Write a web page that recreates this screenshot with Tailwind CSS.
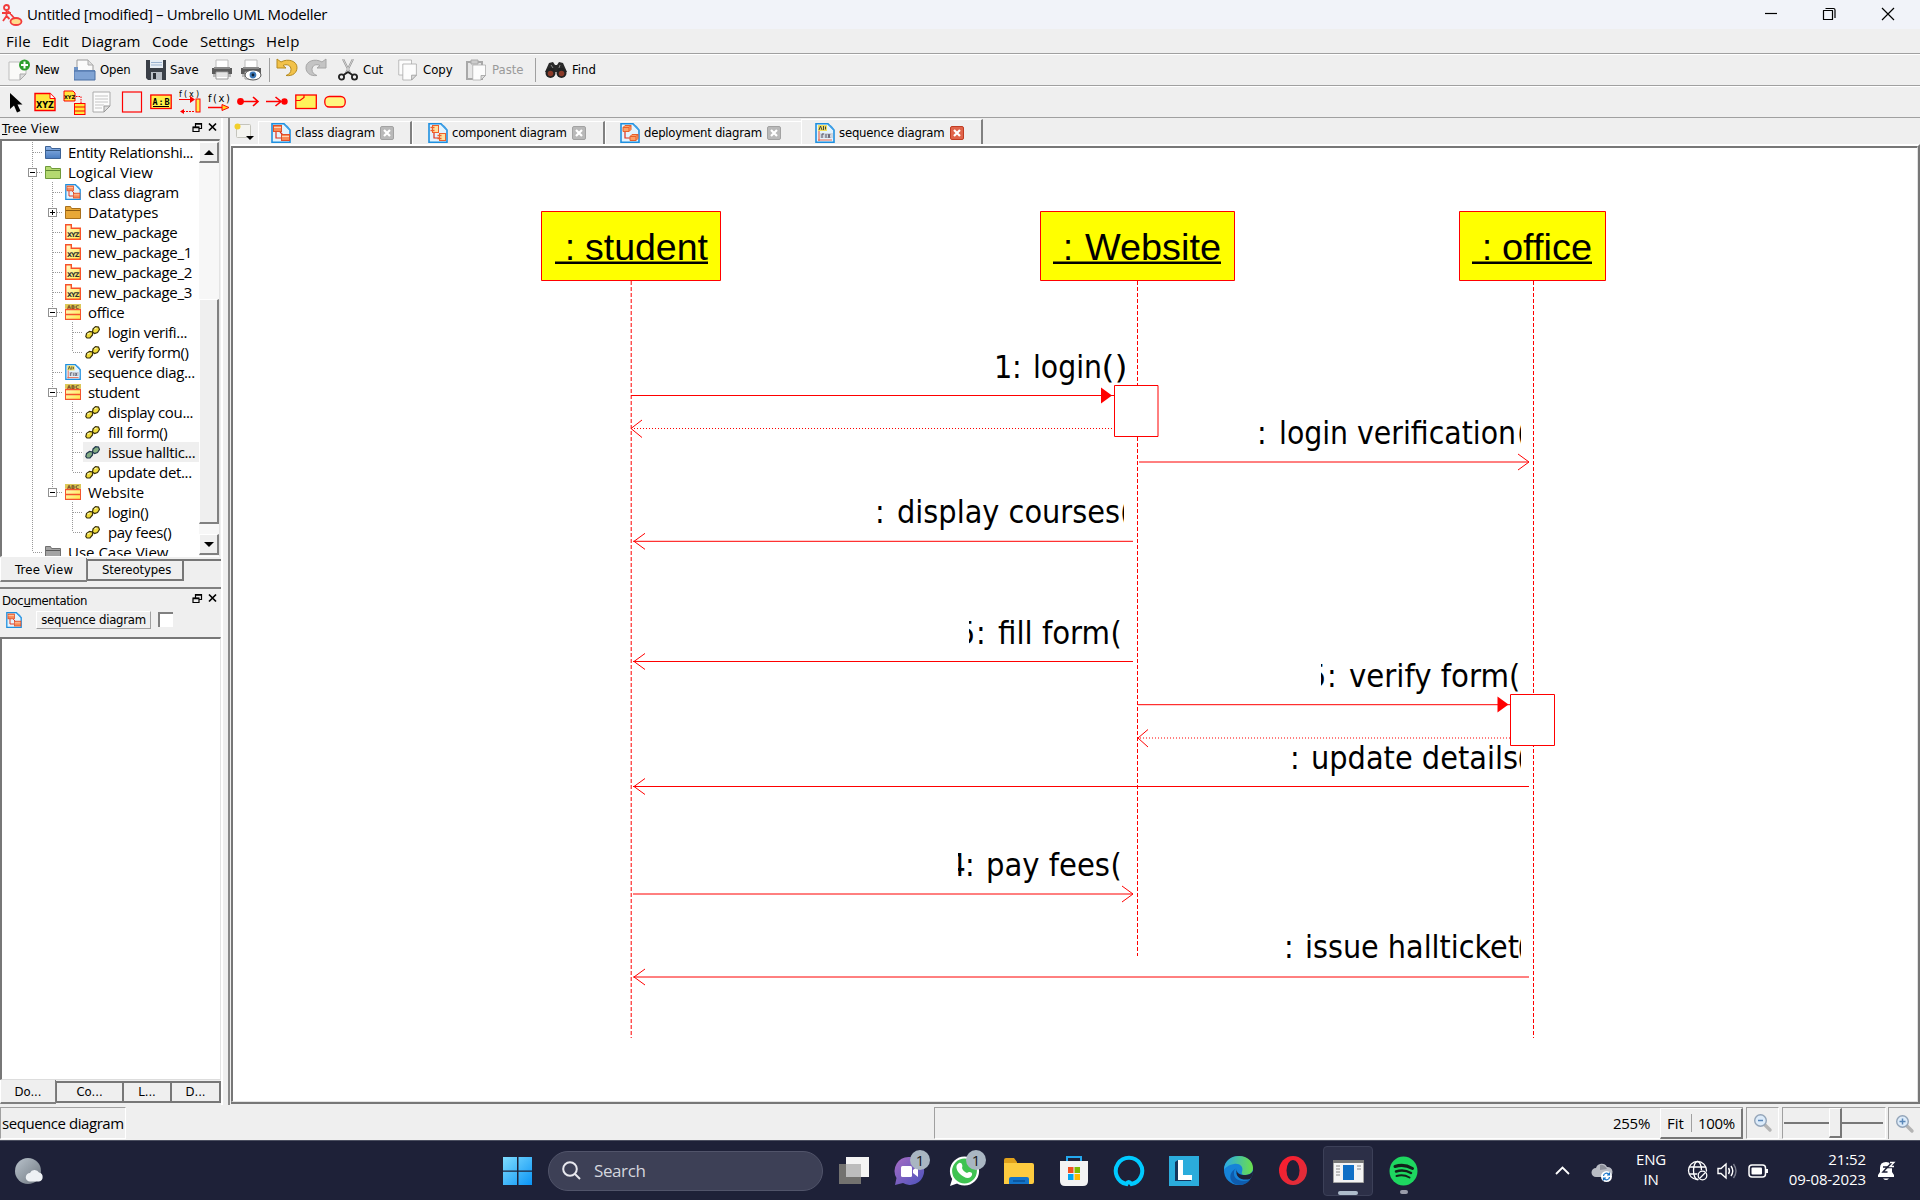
<!DOCTYPE html>
<html lang="en">
<head>
<meta charset="utf-8">
<title>Untitled [modified] – Umbrello UML Modeller</title>
<script src="https://cdn.jsdelivr.net/npm/@tailwindcss/browser@4"></script>
</head>
<body class="w-[1920px] h-[1200px] overflow-hidden bg-[#efefef] text-black font-['Open_Sans',sans-serif] text-[15px] leading-5 whitespace-nowrap">

<svg width="0" height="0" class="absolute">
  <defs>
    <linearGradient id="gBlue" x1="0" y1="0" x2="0" y2="1"><stop offset="0" stop-color="#8fb4e6"/><stop offset="1" stop-color="#4a7cc0"/></linearGradient>
    <linearGradient id="gYel" x1="0" y1="0" x2="1" y2="1"><stop offset="0" stop-color="#fffbd0"/><stop offset="1" stop-color="#ffe94a"/></linearGradient>
    <linearGradient id="gWin" x1="0" y1="0" x2="1" y2="1"><stop offset="0" stop-color="#7fdcff"/><stop offset="1" stop-color="#0a94f5"/></linearGradient>
    <linearGradient id="gMoon" x1="0" y1="0" x2="1" y2="1"><stop offset="0" stop-color="#b9c3cc"/><stop offset="1" stop-color="#6f7780"/></linearGradient>
    <linearGradient id="gChat" x1="0" y1="0" x2="1" y2="1"><stop offset="0" stop-color="#a86cc4"/><stop offset="1" stop-color="#4b53bc"/></linearGradient>
    <linearGradient id="gEdge" x1="0" y1="0" x2="1" y2="0"><stop offset="0" stop-color="#2aa8e8"/><stop offset="1" stop-color="#6be04a"/></linearGradient>
    <linearGradient id="gOpera" x1="0" y1="0" x2="1" y2="1"><stop offset="0" stop-color="#ff1b2d"/><stop offset="1" stop-color="#d8313c"/></linearGradient>
    <symbol id="page" viewBox="0 0 20 20"><path d="M1 .8h12l6 6.2v12.2H1z" fill="#e3f3fd" stroke="#1e8fdf" stroke-width="1.6"/><path d="M12 1l7 7c0-3-2-6-7-7z" fill="#3f9fe6"/></symbol>
    <symbol id="dclass" viewBox="0 0 20 20"><use href="#page"/><path d="M5 7v8h5M9 9l3 3" fill="none" stroke="#e0301c" stroke-width="1.2"/><rect x="2.5" y="2.5" width="8" height="6" fill="#f98b56" stroke="#e0502a"/><rect x="10.5" y="11.5" width="8" height="6" fill="#f98b56" stroke="#e0502a"/><path d="M3 4.5h7M11 13.500h7" stroke="#ffd3b5"/></symbol>
    <symbol id="dcomp" viewBox="0 0 20 20"><use href="#page"/><path d="M6 9v6h5" fill="none" stroke="#e0301c" stroke-width="1.2"/><rect x="4.500" y="2.500" width="6" height="7" fill="#ffe0a0" stroke="#f0602a"/><rect x="11.500" y="10.500" width="6" height="7" fill="#ffe0a0" stroke="#f0602a"/><path d="M2.500 4.500h4M2.500 7.500h4M9.500 12.500h4M9.500 15.500h4" stroke="#f0602a" stroke-width="1.400"/></symbol>
    <symbol id="ddep" viewBox="0 0 20 20"><use href="#page"/><path d="M5 9v6h5" fill="none" stroke="#e0301c" stroke-width="1.2"/><path d="M3 4.500l2-2h6v4l-2 2H3zM10 13.500l2-2h6v4l-2 2h-6z" fill="#fba068" stroke="#e8602a"/><path d="M3 4.500h6v4M9 4.500l2-2M10 13.500h6v4M16 13.500l2-2" fill="none" stroke="#e8602a"/></symbol>
    <symbol id="dseq" viewBox="0 0 20 20"><use href="#page"/><rect x="3" y="2" width="9" height="6" fill="#f2e060"/><path d="M4 7l1.500-4L7 7M8.500 3v4M10.500 3.500v3" stroke="#444" fill="none"/><rect x="5" y="10" width="13" height="5" fill="#cfd6de"/><path d="M7 15v-4h2M11 11v4M13 11l2 4M15 11l-2 4" stroke="#556" fill="none"/><path d="M4 8v10M3 17h14" stroke="#e86a50" stroke-width="1.200"/></symbol>
    <symbol id="pkg" viewBox="0 0 16 16"><path d="M.7.7h5.600v3.600h9v11H.7z" fill="url(#gYel)" stroke="#f8522a" stroke-width="1.400"/><text x="8.200" y="13.200" font-size="6.500" font-weight="bold" font-family="DejaVu Sans" text-anchor="middle" textLength="12.500" fill="#333">XYZ</text></symbol>
    <symbol id="cls" viewBox="0 0 16 16"><rect x=".5" y=".5" width="15" height="15" fill="url(#gYel)"/><rect x="0" y="0" width="16" height="4.500" fill="#dcc95a"/><text x="8" y="4.600" font-size="5.200" font-weight="bold" font-family="DejaVu Sans" text-anchor="middle" textLength="12" fill="#6b4a20">ABC</text><path d="M0 5.500h16M0 10.500h16M0 15.300h16" stroke="#f4552c" stroke-width="1.300"/><path d="M.5 5v10.500M15.500 5v10.500" stroke="#f4552c"/></symbol>
    <symbol id="op" viewBox="0 0 15 13"><path d="M1.500 7.500l3-2 3 .5v3l-2.500 3h-3L.8 10.500zM8 3l2.500-2.300 3 .3 1 2.500-2 3-3 1L7.500 6z" fill="#f0dc3c" stroke="#3a3208" stroke-width="1.200"/><path d="M2.500 8l2-1M9.500 3l2-1.200" stroke="#fff9c0" stroke-width="1.200"/></symbol>
    <symbol id="opsel" viewBox="0 0 15 13"><path d="M1.500 7.500l3-2 3 .5v3l-2.500 3h-3L.8 10.500zM8 3l2.500-2.300 3 .3 1 2.500-2 3-3 1L7.500 6z" fill="#84ad84" stroke="#20384c" stroke-width="1.200"/></symbol>
    <symbol id="fblue" viewBox="0 0 16 16"><path d="M.5 14.500v-12h5l1 2h9v10z" fill="url(#gBlue)" stroke="#3c6296"/><path d="M1 6.500h14" stroke="#34557f"/></symbol>
    <symbol id="fgreen" viewBox="0 0 16 16"><path d="M.5 14.500v-12h5l1 2h9v10z" fill="#b4d970" stroke="#6f9a3a"/><path d="M1 6.500h14" stroke="#5f8632"/></symbol>
    <symbol id="forange" viewBox="0 0 16 16"><path d="M.5 14.500v-12h5l1 2h9v10z" fill="#e8a838" stroke="#a8701c"/><path d="M1 6.500h14" stroke="#8c5a10"/></symbol>
    <symbol id="fgray" viewBox="0 0 16 16"><path d="M.5 14.500v-12h5l1 2h9v10z" fill="#a4a4a4" stroke="#707070"/><path d="M1 6.500h14" stroke="#5a5a5a"/></symbol>
    <symbol id="xgray" viewBox="0 0 14 14"><rect x=".5" y=".5" width="13" height="13" rx="1.500" fill="#b9b9b9" stroke="#a2a2a2"/><path d="M4 4l6 6M10 4l-6 6" stroke="#fff" stroke-width="2.200"/></symbol>
    <symbol id="xred" viewBox="0 0 14 14"><rect x=".5" y=".5" width="13" height="13" rx="1.500" fill="#e0644a" stroke="#c03c22"/><path d="M4 4l6 6M10 4l-6 6" stroke="#fff" stroke-width="2.200"/></symbol>
    <symbol id="dockbtns" viewBox="0 0 26 11"><path d="M3.500 1.500h6v5h-6zM3 2.200h7" fill="none" stroke="#000" stroke-width="1.200"/><path d="M1 5h6v4.500H1z" fill="#efefef" stroke="#000" stroke-width="1.200"/><path d="M1 5.500h6" stroke="#000" stroke-width="1.500"/><path d="M17 1.500l7 7M24 1.500l-7 7" stroke="#000" stroke-width="1.700"/></symbol>
    <symbol id="printer" viewBox="0 0 22 22"><path d="M5 1h12v8H5z" fill="#fff" stroke="#bbb"/><path d="M1 9h20v6H1z" fill="#5c5c5c"/><path d="M3 8h16v2H3z" fill="#8b8b8b"/><path d="M2 15h18v3H2z" fill="#b8b8b8"/><path d="M5 13h12v7H5z" fill="#fff" stroke="#999"/><path d="M6 15h10M6 17h10" stroke="#c8c8c8"/></symbol>
    <symbol id="sheet" viewBox="0 0 20 22"><path d="M1 1h17v14l-6 6H1z" fill="#fcfcfc" stroke="#aaa"/><path d="M18 15h-6v6z" fill="#ddd" stroke="#999"/></symbol>
    <symbol id="lens" viewBox="0 0 20 20"><path d="M11 11l6 6" stroke="#b4b4b4" stroke-width="3.400" stroke-linecap="round"/><circle cx="7.500" cy="7.500" r="5.800" fill="#dcebfa" stroke="#93a4b8" stroke-width="1.400"/></symbol>
  </defs>
</svg>

<div class="flex flex-col w-[1920px] h-[1200px]">

  <!-- title bar -->
  <header class="h-[29px] shrink-0 bg-[#f1f3f9] flex items-center pl-[2px]">
    <svg width="21" height="22" viewBox="0 0 21 22" fill="none" stroke="#f23c3c" stroke-width="1.800"><circle cx="4.500" cy="3.500" r="2.500"/><path d="M4.500 6v6M0 9h9M4.500 12L1 17M4.500 12l3 3M6 7l7 8"/><ellipse cx="14" cy="17.500" rx="5.500" ry="3.500" fill="#ffdc8c"/></svg>
    <span class="ml-1 tracking-[-0.34px] w-[1744px] pb-[2px]">Untitled [modified] – Umbrello UML Modeller</span>
    <svg width="150" height="29" viewBox="0 0 150 29" fill="none" stroke="#000" stroke-width="1.200" class="-ml-2"><path d="M2 13.500h12"/><path d="M60.500 10.500h9v9h-9z" stroke-linejoin="round"/><path d="M62.500 8.500h8q1.500 0 1.500 1.500v8"/><path d="M119 8l12 12M131 8l-12 12"/></svg>
  </header>

  <!-- menu bar -->
  <nav class="h-[25px] shrink-0 border-b border-[#a0a0a0] flex items-center pl-[6px] pb-px">
    <span class="w-9 tracking-[0.3px]">File</span><span class="w-[39px] tracking-[0.1px]">Edit</span><span class="w-[71px]">Diagram</span><span class="w-12">Code</span><span class="w-[66px] tracking-[-0.1px]">Settings</span><span class="tracking-[0.3px]">Help</span>
  </nav>

  <!-- main toolbar -->
  <div class="h-8 shrink-0 border-t border-t-white border-b border-b-[#a0a0a0] flex items-center font-['DejaVu_Sans_Condensed',sans-serif] text-[13px]">
    <div class="w-[66px] pl-2 flex items-center gap-1"><svg width="23" height="22" viewBox="0 0 23 22"><path d="M1 3h17v12l-6 6H1z" fill="#fafaf8" stroke="#bdbdbd"/><path d="M18 15h-6v6z" fill="#ddd" stroke="#aaa"/><circle cx="16.500" cy="6" r="5.500" fill="#2e9e2e"/><path d="M16.500 2.500v7M13 6h7" stroke="#fff" stroke-width="2"/></svg><span class="tracking-[-0.5px]">New</span></div>
    <div class="w-[73px] pl-2 flex items-center gap-1"><svg width="22" height="22" viewBox="0 0 22 22"><path d="M3 1h11l5 5v10H3z" fill="#fafafa" stroke="#999"/><path d="M14 1v5h5" fill="#ddd" stroke="#aaa"/><path d="M0 21V8h4v3h17v10z" fill="#6f94c6"/><path d="M0 21V12h21v9z" fill="#7fa3d4" stroke="#4a6fa3"/></svg><span class="tracking-[-0.2px]">Open</span></div>
    <div class="w-[67px] pl-[7px] flex items-center gap-1"><svg width="20" height="22" viewBox="0 0 20 22"><path d="M0 1h20v20H2l-2-2z" fill="#3a3f47"/><rect x="4" y="1" width="13" height="8" fill="#e8eef5"/><path d="M5 3.500h11M5 6h11" stroke="#9bb3d0"/><rect x="5" y="13" width="11" height="8" fill="#b9bec6"/><rect x="7" y="14" width="3" height="6" fill="#2b2f36"/></svg><span>Save</span></div>
    <svg width="22" height="22" class="ml-[5px]"><use href="#printer"/></svg>
    <svg width="22" height="22" viewBox="0 0 22 22" class="ml-[7px]"><use href="#printer" width="22" height="22"/><ellipse cx="13" cy="16" rx="8" ry="5" fill="#fff" stroke="#555"/><circle cx="13" cy="16" r="3.400" fill="#3b78b8"/><circle cx="13" cy="16" r="1.400" fill="#123"/></svg>
    <div class="ml-[7px] w-px h-6 bg-[#a0a0a0]"></div>
    <svg width="22" height="22" viewBox="0 0 22 22" class="ml-[6px] mb-[2px]"><path d="M1 1v9h9L7 7.500c4-2 8 0 8 4 0 3-2 5-5 6 7 1 11-3 11-8C21 3 12 0 5 4z" fill="#f2c24a" stroke="#b58a1e"/></svg>
    <svg width="22" height="22" viewBox="0 0 22 22" class="ml-[7px] mb-[2px]"><path d="M21 1v9h-9l3-2.500c-4-2-8 0-8 4 0 3 2 5 5 6-7 1-11-3-11-8C1 3 10 0 17 4z" fill="#c4c4c4" stroke="#a6a6a6"/></svg>
    <div class="ml-[11px] w-[60px] flex items-center gap-[5px]"><svg width="20" height="22" viewBox="0 0 20 22" fill="none"><path d="M5 0l7 14M15 0L8 14" stroke="#8c8c8c" stroke-width="2"/><path d="M5 0l7 14M15 0L8 14" stroke="#e8e8e8" stroke-width=".8"/><circle cx="3.500" cy="18" r="2.600" stroke="#222" stroke-width="1.800"/><circle cx="16.500" cy="18" r="2.600" stroke="#222" stroke-width="1.800"/><path d="M5.500 16l4.500-3M14.500 16L10 13" stroke="#222" stroke-width="2"/></svg><span>Cut</span></div>
    <div class="w-[68px] flex items-center gap-[5px]"><svg width="20" height="22" viewBox="0 0 20 22"><use href="#sheet" width="15" height="17"/><use href="#sheet" x="4" y="4" width="16" height="18"/></svg><span>Copy</span></div>
    <div class="w-[69px] flex items-center gap-1 text-[#9a9a9a]"><svg width="22" height="22" viewBox="0 0 22 22"><rect x="1" y="3" width="15" height="17" fill="#e6e6e6" stroke="#a8a8a8" stroke-width="2"/><path d="M5 1h7v4H5z" fill="#ccc" stroke="#aaa"/><use href="#sheet" x="6" y="5" width="15" height="17"/></svg><span>Paste</span></div>
    <div class="w-px h-6 bg-[#a0a0a0]"></div>
    <div class="ml-[9px] flex items-center gap-[5px]"><svg width="22" height="18" viewBox="0 0 22 18"><path d="M4 2l4-1 2 3h2l2-3 4 1 4 9H0z" fill="#2a2a2a"/><circle cx="5.500" cy="12" r="5" fill="#222"/><circle cx="16.500" cy="12" r="5" fill="#222"/><circle cx="5.500" cy="12.500" r="2.800" fill="#8a3a28"/><circle cx="16.500" cy="12.500" r="2.800" fill="#8a3a28"/><path d="M6 4l2 3M15 4l-1 3" stroke="#888"/></svg><span>Find</span></div>
  </div>

  <!-- diagram tools -->
  <div class="h-8 shrink-0 border-t border-t-white border-b border-b-[#a0a0a0] flex items-center gap-[7px] pl-[9px]">
    <svg width="22" height="22" viewBox="0 0 22 22"><path d="M1 2v16l4-3.500 3 7 3.500-1.500-3-6.500h5z"/></svg>
    <svg width="22" height="22" viewBox="0 0 22 22" class="ml-[-4px]"><path d="M1 2.500h15l5 5V19.500H1z" fill="#ffe63c" stroke="#f00" stroke-width="1.400"/><path d="M16 2.500v5h5" fill="#fff" stroke="#f00"/><text x="11" y="16.500" font-size="8.500" font-weight="bold" font-family="DejaVu Sans" text-anchor="middle" textLength="18" lengthAdjust="spacingAndGlyphs">XYZ</text></svg>
    <svg width="23" height="25" viewBox="0 0 23 25"><path d="M1 1h9l2 2v8H1z" fill="#ffe63c" stroke="#f00"/><text x="6.500" y="9" font-size="5" font-weight="bold" font-family="DejaVu Sans" text-anchor="middle">XYZ</text><path d="M13 6.500h5V13" fill="none" stroke="#f00" stroke-dasharray="1.500 1"/><rect x="11.500" y="13.500" width="10.500" height="11" fill="#ffe63c" stroke="#f00"/><path d="M11 17h11M11 21h11" stroke="#f00"/></svg>
    <svg width="20" height="22" viewBox="0 0 20 22" class="ml-[-1px]"><use href="#sheet" width="20" height="22"/><path d="M3 5h13M3 8h13M3 11h13M3 14h9M3 17h7" stroke="#c4c4c4"/></svg>
    <svg width="22" height="22" viewBox="0 0 22 22" class="ml-[2px]"><rect x="1.500" y="1" width="19" height="20" fill="none" stroke="#f00" stroke-width="1.200"/></svg>
    <svg width="22" height="22" viewBox="0 0 22 22"><rect x=".8" y="4" width="20.400" height="13.500" fill="#fff04a" stroke="#f00" stroke-width="1.300"/><text x="11" y="13.500" font-size="8.500" font-weight="bold" font-family="DejaVu Sans Mono" text-anchor="middle" textLength="17">A:B</text><path d="M3 15.500h16" stroke="#000"/></svg>
    <svg width="22" height="24" viewBox="0 0 22 24"><text x="0" y="6.500" font-size="8" font-family="DejaVu Sans" textLength="20">f(x)</text><path d="M0 9.500h13" stroke="#f00"/><path d="M11 6l5 3.500-5 3.500z" fill="#f00"/><rect x="17" y="9" width="4" height="13" fill="#fff04a" stroke="#f00"/><path d="M4 21.500h12" stroke="#f00" stroke-dasharray="2 1"/><path d="M5 19l-4 2.500L5 24z" fill="#f00"/></svg>
    <svg width="23" height="22" viewBox="0 0 23 22"><text x="0" y="10.500" font-size="10" font-family="DejaVu Sans" textLength="22">f(x)</text><path d="M0 16.500h16" stroke="#f00" stroke-width="1.500"/><path d="M14 13.500l7 3-7 3z" fill="#ffd21e" stroke="#f00"/></svg>
    <svg width="23" height="22" viewBox="0 0 23 22" fill="none" stroke="#f00" stroke-width="1.600" class="ml-[-1px]"><circle cx="3.500" cy="10.500" r="2.600" fill="#f00"/><path d="M3 10.500h18M16 6l5 4.500-5 4.500"/></svg>
    <svg width="22" height="22" viewBox="0 0 22 22" fill="none" stroke="#f00" stroke-width="1.600" class="ml-[-1px]"><path d="M0 10.500h15M9.500 6l5.500 4.500-5.500 4.500"/><circle cx="18.500" cy="10.500" r="2.400" fill="#f00"/></svg>
    <svg width="22" height="22" viewBox="0 0 22 22"><rect x=".8" y="4" width="20.500" height="13.500" fill="#fff35a" stroke="#f00" stroke-width="1.300"/><path d="M1 9.500h4l4-3V4" fill="none" stroke="#f00" stroke-width="1.200"/></svg>
    <svg width="22" height="22" viewBox="0 0 22 22"><rect x=".8" y="5.500" width="20.400" height="10.500" rx="4.500" fill="#fff680" stroke="#f00" stroke-width="1.300"/></svg>
  </div>

  <!-- docks and canvas -->
  <div class="h-[987px] shrink-0 flex">
    <aside class="w-[223px] shrink-0 border-r-2 border-white flex flex-col font-['DejaVu_Sans_Condensed',sans-serif] text-[13px]">
      <div class="h-[21px] shrink-0 flex items-center justify-between pl-[2px] pr-[3px]"><span class="tracking-[0.2px] pt-px"><u>T</u>ree View</span><svg width="26" height="11" class="mb-0.5"><use href="#dockbtns"/></svg></div>
      <div class="h-[418px] w-[220px] shrink-0 border-t-2 border-l-2 border-[#777] border-b border-b-white border-r border-r-[#e3e3e3] bg-white flex font-['Open_Sans',sans-serif] text-[15px]">
        <div id="tree" class="relative flex-1 h-full overflow-hidden pt-px">
          <svg width="90" height="415" class="absolute left-0 -top-px" fill="none" stroke="#999" stroke-dasharray="1 1"><path d="M30.500 0V412M50.500 42V352M70.500 182V212M70.500 262V332M70.500 362V392M31 12.500H41M31 32.500H41M31 412.500H41M51 52.500H61M51 72.500H61M51 92.500H61M51 112.500H61M51 132.500H61M51 152.500H61M51 172.500H61M51 232.500H61M51 252.500H61M51 352.500H61M71 192.500H81M71 212.500H81M71 272.500H81M71 292.500H81M71 312.500H81M71 332.500H81M71 372.500H81M71 392.500H81"/></svg>
        </div>
        <div class="w-5 shrink-0 flex flex-col bg-[#f7f7f7]">
          <div class="h-[21px] shrink-0 mt-[1px] bg-[#efefef] border border-b-2 border-r-2 border-white border-b-[#808080] border-r-[#808080] flex items-center justify-center"><svg width="10" height="5"><path d="M0 5l5-5 5 5z"/></svg></div>
          <div class="h-[225px] mt-[136px] bg-[#efefef] border border-b-2 border-r-2 border-white border-b-[#808080] border-r-[#808080]"></div>
          <div class="h-[21px] mt-auto mb-px bg-[#efefef] border border-b-2 border-r-2 border-white border-b-[#808080] border-r-[#808080] flex items-center justify-center"><svg width="10" height="5"><path d="M0 0l5 5 5-5z"/></svg></div>
        </div>
      </div>
      <div class="h-[30px] shrink-0 flex items-start pt-px">
        <div class="w-[87px] h-6 border-l border-white border-b-2 border-r border-b-[#808080] border-r-[#808080] flex items-center pl-[14px] pt-px tracking-[0.3px]">Tree View</div>
        <div class="w-[97px] h-[22px] mt-px border-2 border-l border-[#777] flex items-center pl-[14px] tracking-[-0.1px]">Stereotypes</div>
        <div class="flex-1 mt-px border-t-2 border-[#777]"></div>
      </div>
      <div class="h-[2px] shrink-0 bg-[#808080]"></div>
      <div class="h-[21px] shrink-0 mt-px flex items-center justify-between pl-[2px] pr-[3px]"><span class="tracking-[-0.4px]">Doc<u>u</u>mentation</span><svg width="26" height="11" class="mb-1"><use href="#dockbtns"/></svg></div>
      <div class="h-[26px] shrink-0 flex items-start pl-[6px]">
        <svg width="16" height="16" class="mt-[1px]"><use href="#dclass"/></svg>
        <div class="ml-[14px] w-[115px] h-[18px] border border-white border-b-[#a0a0a0] border-r-[#a0a0a0] flex items-center justify-center tracking-[-0.25px]">sequence diagram</div>
        <div class="ml-[7px] w-[15px] h-[15px] mt-[1px] bg-white border-t-2 border-l-2 border-[#808080]"></div>
      </div>
      <div class="h-[443px] w-[221px] shrink-0 bg-white border-t-2 border-l-2 border-[#777] border-b border-b-[#ddd] border-r border-r-[#e3e3e3]"></div>
      <div class="flex items-start">
        <div class="w-[56px] h-6 border-l border-white border-b-2 border-r border-b-[#808080] border-r-[#808080] flex items-center justify-center pt-px">Do...</div>
        <div class="w-[68px] h-[22px] mt-px border-2 border-l border-[#777] flex items-center justify-center">Co...</div>
        <div class="w-[48px] h-[22px] mt-px border-2 border-l-0 border-[#777] flex items-center justify-center">L...</div>
        <div class="w-[49px] h-[22px] mt-px border-2 border-l-0 border-[#777] flex items-center justify-center">D...</div>
      </div>
    </aside>

    <main class="ml-[5px] flex-1 border-l-2 border-[#8a8a8a] flex flex-col font-['DejaVu_Sans_Condensed',sans-serif] text-[13px]">
      <div class="h-[26px] shrink-0 flex">
        <div class="w-[28px] pl-1 pt-[5px]"><svg width="20" height="17" viewBox="0 0 20 17"><rect x="2.500" y="1.500" width="14" height="13" rx="1" fill="#f4f4f0" stroke="#c4c4bc"/><circle cx="3.500" cy="3.500" r="3" fill="#f2cf2a"/><path d="M12 13h8l-4 4z"/></svg></div>
        <div class="w-[154px] mt-[3px] border-t border-l border-white border-r-2 border-r-[#808080] flex items-center pl-3"><svg width="20" height="20"><use href="#dclass"/></svg><span class="ml-1 w-[85px] tracking-[-0.1px]">class diagram</span><svg width="14" height="14"><use href="#xgray"/></svg></div>
        <div class="w-[193px] mt-[3px] border-t border-l border-white border-r-2 border-r-[#808080] flex items-center pl-[15px]"><svg width="20" height="20"><use href="#dcomp"/></svg><span class="ml-1 w-[120px] tracking-[-0.23px]">component diagram</span><svg width="14" height="14"><use href="#xgray"/></svg></div>
        <div class="w-[196px] mt-[3px] border-t border-l border-white flex items-center pl-[14px]"><svg width="20" height="20"><use href="#ddep"/></svg><span class="ml-1 w-[123px] tracking-[-0.25px]">deployment diagram</span><svg width="14" height="14"><use href="#xgray"/></svg></div>
        <div class="w-[182px] mt-px border-t border-l border-white border-r-2 border-r-[#808080] flex items-center pl-[13px] pt-px"><svg width="20" height="20"><use href="#dseq"/></svg><span class="ml-1 w-[111px] tracking-[-0.2px]">sequence diagram</span><svg width="14" height="14"><use href="#xred"/></svg></div>
      </div>
      <div class="h-[960px] ml-px border-t-2 border-t-white border-r-2 border-r-[#777] border-b-2 border-b-[#777]">
        <div class="h-full border-t-2 border-l-2 border-[#777] border-b border-b-[#e3e3e3] border-r border-r-[#e3e3e3] bg-white">
          <svg width="1683" height="953" viewBox="233 148 1683 953" fill="none" stroke="#f00">
            <defs>
              <clipPath id="c1"><path d="M996 340H1125V385.500H996z"/></clipPath>
              <clipPath id="c2"><path d="M1240 400H1521V460H1240z"/></clipPath>
              <clipPath id="c3"><path d="M860 480H1124V540H860z"/></clipPath>
              <clipPath id="c4"><path d="M969 600H1124V660H969z"/></clipPath>
              <clipPath id="c5"><path d="M1321 640H1521V694H1321z"/></clipPath>
              <clipPath id="c6"><path d="M1260 720H1521V786H1260z"/></clipPath>
              <clipPath id="c7"><path d="M958 840H1124V893H958z"/></clipPath>
              <clipPath id="c8"><path d="M1260 920H1521V976H1260z"/></clipPath>
            </defs>
            <g stroke-dasharray="4 2"><path d="M631.200 281V1038M1137.500 281V956M1533.500 281V1038"/></g>
            <g fill="#ff0"><path d="M541.500 211.500h179v69h-179zM1040.500 211.500h194v69h-194zM1459.500 211.500h146v69h-146z"/></g>
            <g stroke="none" fill="#000" font-family="Liberation Sans" font-size="36">
              <text y="260" x="565">:<tspan x="585" textLength="123" lengthAdjust="spacingAndGlyphs">student</tspan></text>
              <text y="260" x="1063">:<tspan x="1085" textLength="136" lengthAdjust="spacingAndGlyphs">Website</tspan></text>
              <text y="260" x="1482">:<tspan x="1502" textLength="90" lengthAdjust="spacingAndGlyphs">office</tspan></text>
              <path d="M555 261.500h153v2.500H555zM1053 261.500h168v2.500h-168zM1472 261.500h120v2.500h-120z"/>
            </g>
            <path d="M631 395.500H1114M1139 462H1529M633 541.300H1133M633 661.500H1133M1138 704.700H1510M633 786.500H1529M633 894H1133M633 977H1529"/>
            <path d="M634 428.500H1112M1140 738H1510" stroke-dasharray="1 2"/>
            <path d="M642 420l-11 8.500 11 9M1518 454l11 8-11 8M645 533.300l-11 8 11 8M645 653.500l-11 8 11 8M1148 729.500l-10 8.500 10 9M645 778.500l-11 8 11 8M1122 886l11 8-11 8M645 969l-11 8 11 8"/>
            <path d="M1101 387.500l11 8-11 8zM1497.500 696.500l11 8-11 8z" fill="#f00" stroke="none"/>
            <path d="M1114.500 385.500h43.500v51h-43.500zM1510.500 694.500h44v51h-44z" fill="#fff"/>
            <g stroke="none" fill="#000" font-family="DejaVu Sans Condensed" font-size="32">
              <text y="377.500" clip-path="url(#c1)"><tspan x="994">1</tspan><tspan x="1012">:</tspan><tspan x="1033" textLength="69" lengthAdjust="spacingAndGlyphs">login</tspan><tspan x="1101.500" textLength="26" lengthAdjust="spacingAndGlyphs">()</tspan></text>
              <text y="443.500" clip-path="url(#c2)"><tspan x="1257">:</tspan><tspan x="1279" textLength="237" lengthAdjust="spacingAndGlyphs">login verification</tspan><tspan x="1517">(</tspan></text>
              <text y="522.500" clip-path="url(#c3)"><tspan x="875">:</tspan><tspan x="897" textLength="223" lengthAdjust="spacingAndGlyphs">display courses</tspan><tspan x="1120">(</tspan></text>
              <text y="643.500" clip-path="url(#c4)"><tspan x="957">5</tspan><tspan x="976">:</tspan><tspan x="998" textLength="112" lengthAdjust="spacingAndGlyphs">fill form</tspan><tspan x="1110.500">(</tspan></text>
              <text y="686.500" clip-path="url(#c5)"><tspan x="1308">5</tspan><tspan x="1327">:</tspan><tspan x="1349" textLength="160" lengthAdjust="spacingAndGlyphs">verify form</tspan><tspan x="1509">(</tspan></text>
              <text y="768.500" clip-path="url(#c6)"><tspan x="1290">:</tspan><tspan x="1311" textLength="207" lengthAdjust="spacingAndGlyphs">update details</tspan><tspan x="1517">(</tspan></text>
              <text y="875.500" clip-path="url(#c7)"><tspan x="947.500">4</tspan><tspan x="965">:</tspan><tspan x="986" textLength="124" lengthAdjust="spacingAndGlyphs">pay fees</tspan><tspan x="1110.500">(</tspan></text>
              <text y="957.500" clip-path="url(#c8)"><tspan x="1284">:</tspan><tspan x="1305" textLength="214" lengthAdjust="spacingAndGlyphs">issue hallticket</tspan><tspan x="1517">(</tspan></text>
            </g>
          </svg>
        </div>
      </div>
    </main>
  </div>

  <!-- status bar -->
  <footer class="h-[35px] shrink-0 flex pt-[2px] pb-px">
    <div class="w-[126px] border-t border-l border-[#a0a0a0] border-b border-b-white border-r border-r-white flex items-center pl-px tracking-[-0.45px]">sequence diagram</div>
    <div class="ml-[808px] w-[809px] border-t border-l border-[#a0a0a0] border-b border-b-white flex items-center justify-end">
      <span class="mr-[10px] tracking-[-0.3px]">255%</span>
      <div class="w-[83px] h-[31px] border border-white border-b-2 border-r-2 border-b-[#777] border-r-[#777] flex items-center pl-[6px]"><span class="w-6">Fit</span><span class="w-px h-[18px] bg-[#a0a0a0] mr-[6px]"></span><span class="tracking-[-0.3px]">100%</span></div>
    </div>
    <div class="ml-[3px] w-[33px] border-t border-l border-[#a0a0a0] border-r border-r-white border-b border-b-white flex items-center pl-[6px]"><svg width="20" height="20" viewBox="0 0 20 20"><use href="#lens"/><path d="M5 7.500h5" stroke="#5a87b8" stroke-width="1.500"/></svg></div>
    <div class="ml-[3px] w-[104px] border-t border-l border-[#a0a0a0] border-r border-r-white border-b border-b-white flex items-start">
      <div class="w-[45px] h-[2px] mt-[14px] ml-px bg-[#777]"></div><div class="w-[13px] h-[30px] border border-white border-b-2 border-r-2 border-b-[#777] border-r-[#777]"></div><div class="w-[41px] h-[2px] mt-[14px] bg-[#777]"></div>
    </div>
    <div class="ml-[2px] flex-1 border-t border-l border-[#a0a0a0] flex items-center pl-[6px]"><svg width="20" height="20" viewBox="0 0 20 20"><use href="#lens"/><path d="M4.500 7.500h6M7.500 4.500v6" stroke="#5a87b8" stroke-width="1.500"/></svg></div>
  </footer>

  <!-- Windows taskbar -->
  <div class="h-[60px] shrink-0 border-t border-[#4b4f60] bg-[#1e2138] flex items-center text-white">
    <div class="w-[503px] pl-[14px]"><svg width="30" height="28" viewBox="0 0 30 28"><circle cx="14" cy="14" r="13" fill="url(#gMoon)"/><path d="M16 24.500a4.200 4.200 0 0 1 0-8.500 5 5 0 0 1 9-.5 4.600 4.600 0 0 1 0 9z" fill="#eef1f4"/></svg></div>
    <svg width="30" height="30" viewBox="0 0 30 30" fill="url(#gWin)"><path d="M0 1h14v13.500H0zM15.500 1H29v13.500H15.500zM0 15.800h14V29H0zM15.500 15.800H29V29H15.500z"/></svg>
    <div class="ml-[15px] w-[275px] h-10 rounded-full bg-[#3d4056] border border-[#51546a] flex items-center pl-3 gap-[12px] text-[17px] tracking-[-0.4px] text-[#d4d6de]"><svg width="21" height="21" viewBox="0 0 21 21" fill="none" stroke="#e8e8ee" stroke-width="2"><circle cx="9" cy="9" r="6.800"/><path d="M14 14l5 5"/></svg>Search</div>
    <svg width="30" height="30" viewBox="0 0 30 30" class="ml-[16px]"><rect x="0" y="8" width="22" height="20" fill="#73726f"/><rect x="7" y="1" width="23" height="20" fill="#f4f4f4"/><path d="M7 8h15v13H7z" fill="#bdbdbd"/></svg>
    <svg width="38" height="42" viewBox="0 0 38 42" class="ml-[25px]"><path d="M15 7a14 14 0 1 1-6 26L1 35l1.500-7A14 14 0 0 1 15 7z" fill="url(#gChat)"/><rect x="7" y="16" width="11" height="11" rx="1.500" fill="#fff"/><path d="M19 20l5-4v11l-5-4z" fill="#fff"/><circle cx="26" cy="10" r="10" fill="#a9b6c2"/><text x="26" y="15.500" font-size="15" text-anchor="middle" fill="#1a1a1a">1</text></svg>
    <svg width="38" height="42" viewBox="0 0 38 42" class="ml-[17px]"><circle cx="15.500" cy="21" r="13.500" fill="#3fc351" stroke="#fff" stroke-width="2.200"/><path d="M1 36l2.500-8 6 5z" fill="#fff"/><path d="M10 13c3-1 4 3 3 5 1 3 3 4 5 5 2-2 6-1 5 2-2 5-8 3-12-1s-5-9-1-11z" fill="#fff"/><circle cx="27" cy="10" r="10" fill="#a9b6c2"/><text x="27" y="15.500" font-size="15" text-anchor="middle" fill="#1a1a1a">1</text></svg>
    <svg width="30" height="30" viewBox="0 0 30 30" class="ml-[17px]"><path d="M0 4q0-2 2-2h8l3 4v4H0z" fill="#e0a11b"/><path d="M0 7h28q2 0 2 2v17q0 2-2 2H0z" fill="#fdcb3f"/><path d="M5 28v-5q0-2 2-2h16q2 0 2 2v5z" fill="#1374c9"/><path d="M9 25h12" stroke="#0a4f94" stroke-width="1.500"/></svg>
    <svg width="30" height="32" viewBox="0 0 30 32" class="ml-[25px]"><path d="M8 7V2h14v5" fill="none" stroke="#24a8ee" stroke-width="2"/><path d="M1 6h28v20q0 5-5 5H6q-5 0-5-5z" fill="#f3f3f3"/><path d="M9 12h5.500v6H9z" fill="#f25022"/><path d="M15.500 12H21v6h-5.500z" fill="#7fba00"/><path d="M9 19h5.500v6H9z" fill="#00a4ef"/><path d="M15.500 19H21v6h-5.500z" fill="#ffb900"/></svg>
    <svg width="32" height="32" viewBox="0 0 32 32" class="ml-[24px]"><path d="M13.500 29A13.200 13.200 0 1 1 18.500 29Q15.500 25 13.500 29z" fill="none" stroke="#00caff" stroke-width="4"/></svg>
    <svg width="30" height="30" viewBox="0 0 30 30" class="ml-[24px]"><path d="M0 0h30v30H0z" fill="#2bacdc"/><path d="M6 6l3-2v17l13 1 0 3H6z" fill="#14365e"/><path d="M9 4h5v15h9v5H9z" fill="#fff"/></svg>
    <svg width="31" height="31" viewBox="0 0 31 31" class="ml-[24px]"><circle cx="15.500" cy="15.500" r="14.500" fill="#1683d8"/><path d="M1 15C1 5 9 1 16 1c9 0 14 6 14 12 0 5-4 7-8 7-3 0-4-1-3-3 2-6-3-9-8-8-6 1-9 4-10 6z" fill="url(#gEdge)"/><path d="M11 17c-1 7 6 11 16 8-4 5-10 6-15 4-6-3-7-12 2-16-2 1-3 2-3 4z" fill="#0f5cad"/><path d="M14 14c-1 4 3 6 8 6 3 0 6-1 8-4 0 4-1 6-3 8-7 2-16-1-13-10z" fill="#1e2138"/></svg>
    <svg width="30" height="31" viewBox="0 0 30 31" class="ml-[24px]"><ellipse cx="15" cy="15.500" rx="14" ry="14.500" fill="url(#gOpera)"/><ellipse cx="15" cy="15.500" rx="6.500" ry="10.500" fill="#1e2138"/></svg>
    <div class="ml-[15px] w-[50px] h-[50px] rounded bg-[#2c2f47] border border-[#3c4058] flex flex-col items-center justify-end gap-2"><svg width="31" height="23" viewBox="0 0 31 23"><path d="M0 0h31v23H0z" fill="#f4f4f4" stroke="#888" stroke-width="1.500"/><path d="M0 0h31v3H0z" fill="#777"/><path d="M10 5h11v15H10z" fill="#0f6fc6"/><path d="M3 6h4M3 9h4M3 12h4M3 15h4M24 6h4M24 9h4" stroke="#888"/></svg><div class="w-5 h-1 rounded-full bg-[#aebccb]"></div></div>
    <div class="ml-[16px] flex flex-col items-center gap-1 pt-2"><svg width="29" height="30" viewBox="0 0 29 30" fill="none" stroke="#12221a" stroke-linecap="round"><ellipse cx="14.500" cy="15" rx="14" ry="14.500" fill="#1ed760" stroke="none"/><path d="M6 10.500q9-3 17.500 2" stroke-width="3"/><path d="M7 15.500q8-2.500 15 1.500" stroke-width="2.500"/><path d="M7.500 20q7-2 13 1.500" stroke-width="2"/></svg><div class="w-2 h-1 rounded-full bg-[#9a9caa]"></div></div>
    <svg width="15" height="9" viewBox="0 0 15 9" class="ml-[137px]" fill="none" stroke="#fff" stroke-width="1.800"><path d="M1 8l6.500-6.500L14 8"/></svg>
    <svg width="22" height="20" viewBox="0 0 22 20" class="ml-[21px] mt-1"><path d="M5 14a4.500 4.500 0 0 1 0-9 6 6 0 0 1 11-1 5 5 0 0 1 1 10z" fill="#b9bcc4"/><path d="M9 2a6 6 0 0 1 7 4l-7 1z" fill="#8d909a"/><circle cx="15.500" cy="13.500" r="5.500" fill="#fff"/><path d="M12.500 13a3 3 0 0 1 5.500-1.500M18.500 14a3 3 0 0 1-5.500 1.500M18.500 9.500v2.500h-2.500M12.500 17.500V15h2.500" fill="none" stroke="#1572c8" stroke-width="1.200"/></svg>
    <div class="ml-[22px] w-[32px] text-center tracking-[-0.2px] pb-[3px]">ENG<br>IN</div>
    <svg width="22" height="22" viewBox="0 0 22 22" class="ml-[20px]" fill="none" stroke="#fff" stroke-width="1.300"><circle cx="10.500" cy="10.500" r="9"/><ellipse cx="10.500" cy="10.500" rx="4" ry="9"/><path d="M2 7h17M2 14h17"/><circle cx="15.500" cy="15.500" r="5.500" fill="#1e2138" stroke="none"/><circle cx="15.500" cy="15.500" r="4.300"/><path d="M12.500 18.500l6-6"/></svg>
    <svg width="21" height="20" viewBox="0 0 21 20" class="ml-[8px]" fill="none" stroke="#fff" stroke-width="1.400"><path d="M1 7.500h3l5-4.500v14l-5-4.500H1z"/><path d="M11.500 7q2 3 0 6M14 5q3.500 5 0 10"/><path d="M16.500 3q5 7 0 14" stroke="#7b7d8c"/></svg>
    <svg width="21" height="14" viewBox="0 0 21 14" class="ml-[10px]"><rect x="1" y="1" width="16.500" height="12" rx="3" fill="none" stroke="#fff" stroke-width="1.500"/><rect x="3.500" y="3.500" width="10.500" height="7" rx="1" fill="#fff"/><path d="M19 5v4" stroke="#fff" stroke-width="2"/></svg>
    <div class="ml-auto text-right pb-[3px] tracking-[-0.1px]">21:52<br>09-08-2023</div>
    <svg width="20" height="22" viewBox="0 0 20 22" class="ml-[11px] mr-[23px]"><path d="M1 17v-2l2-3V8q0-6 6-6t6 6v4l2 3v2z" fill="#fff"/><path d="M6 18.500h6q-3 3-6 0z" fill="#fff"/><path d="M6 7h4.500L6 12h4.500" fill="none" stroke="#1e2138" stroke-width="1.500"/><path d="M12.500 2.500h4l-4 4h4" fill="none" stroke="#1e2138" stroke-width="3.500"/><path d="M13 2.500h4l-4 4h4" fill="none" stroke="#fff" stroke-width="1.300"/></svg>
  </div>
</div>

<script>
// rows: depth, icon symbol, label, expander sign
const rows = [
  [0,'fblue','Entity Relationshi...'],[0,'fgreen','Logical View','-'],[1,'dclass','class diagram'],[1,'forange','Datatypes','+'],
  [1,'pkg','new_package'],[1,'pkg','new_package_1'],[1,'pkg','new_package_2'],[1,'pkg','new_package_3'],
  [1,'cls','office','-'],[2,'op','login verifi...'],[2,'op','verify form()'],[1,'dseq','sequence diag...'],
  [1,'cls','student','-'],[2,'op','display cou...'],[2,'op','fill form()'],[2,'opsel','issue halltic...'],[2,'op','update det...'],
  [1,'cls','Website','-'],[2,'op','login()'],[2,'op','pay fees()'],[0,'fgray','Use Case View']
];
const pad = ['pl-[26px]', 'pl-[46px]', 'pl-[66px]'];
document.getElementById('tree').insertAdjacentHTML('beforeend', rows.map(([d, icon, label, sign]) => {
  const box = sign ? `<svg width="9" height="9" viewBox="0 0 9 9"><rect x=".5" y=".5" width="8" height="8" fill="#fff" stroke="#919191"/><path d="M2 4.500h5${sign === '+' ? 'M4.500 2v5' : ''}" stroke="#000"/></svg>` : '<span class="w-[9px]"></span>';
  const sel = icon === 'opsel' ? 'bg-[#efefef]' : '';
  const size = d === 2 ? 'width="15" height="13"' : 'width="16" height="16"';
  const track = /[A-Z]/.test(label) && !label.startsWith('Entity') ? 'tracking-normal' : 'tracking-[-0.35px]';
  return `<div class="relative h-5 flex items-center ${pad[d]}">${box}<span class="flex items-center flex-1 h-5 ml-[6px] pl-[2px] ${sel}"><span class="w-[18px] shrink-0"><svg ${size}><use href="#${icon}"/></svg></span><span class="pl-[5px] ${track}">${label}</span></span></div>`;
}).join(''));
</script>
</body>
</html>
